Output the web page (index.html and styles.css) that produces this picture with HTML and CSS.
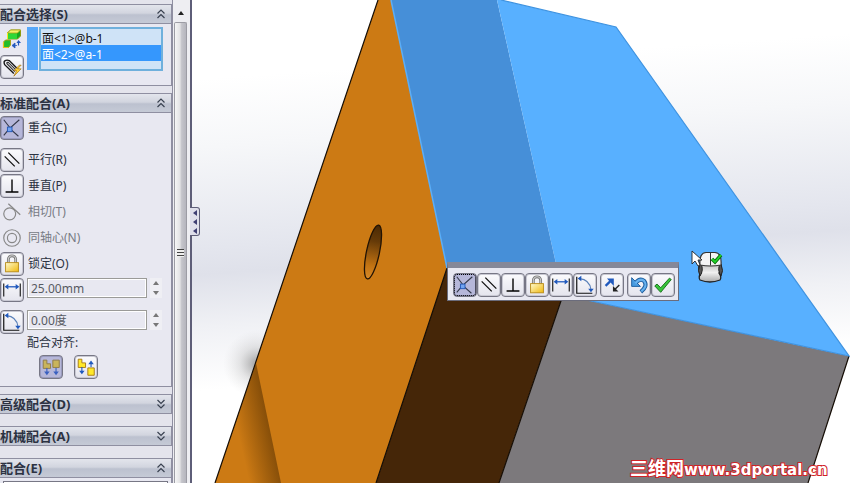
FILE: index.html
```html
<!DOCTYPE html>
<html lang="zh-CN">
<head>
<meta charset="utf-8">
<title>配合</title>
<link rel="stylesheet" href="styles.css">
</head>
<body>
<svg class="defs" aria-hidden="true">
  <defs>
    <linearGradient id="gold" x1="0" y1="0" x2="1" y2="1"><stop offset="0" stop-color="#fffbd0"/><stop offset="1" stop-color="#f0b80c"/></linearGradient>
    <symbol id="coincident" viewBox="0 0 24 24"><path d="M3 3l7 9L20 3M10 13l9 8M9 13l-6 7" fill="none" stroke="#333849" stroke-width="1.200"/><rect x="7" y="11" width="5" height="5" fill="#72a4f0" stroke="#2458b8"/></symbol>
    <symbol id="parallel" viewBox="0 0 24 24"><path d="M4 8l11 11M8 4l12 12" stroke="#111" stroke-width="1.400"/></symbol>
    <symbol id="perpendicular" viewBox="0 0 24 24"><path d="M5 18.500h14M12 5v13" stroke="#000" stroke-width="1.500"/></symbol>
    <symbol id="lock" viewBox="0 0 24 24"><path d="M8 12V7a4 4 0 0 1 8 0v5" fill="none" stroke="#777" stroke-width="3"/><path d="M8 12V7a4 4 0 0 1 8 0v5" fill="none" stroke="#ccc" stroke-width="1.200"/><rect x="5" y="10.500" width="14" height="10" fill="url(#gold)" stroke="#b88b18"/></symbol>
    <symbol id="distance" viewBox="0 0 24 24"><path d="M3 5v14M21 5v14" stroke="#111" stroke-width="1.200"/><path d="M6 8.500h12" stroke="#2059bd" stroke-width="1.400"/><path d="M4 8.500l4-3v6zM20 8.500l-4-3v6z" fill="#2059bd"/></symbol>
    <symbol id="angle" viewBox="0 0 24 24"><path d="M3 3v18H20" fill="none" stroke="#111" stroke-width="1.300"/><path d="M6 5q11 1 12.500 12" fill="none" stroke="#5a80b8" stroke-width="1.200"/><path d="M4 5l4-3v6zM18.500 20l-3-4h6z" fill="#2059bd"/></symbol>
    <symbol id="chevrons" viewBox="0 0 8 10"><path d="M.5 4.500L4 1l3.500 3.500M.5 9L4 5.500 7.500 9" fill="none" stroke="#394150" stroke-width="1.200"/></symbol>
  </defs>
</svg>

<aside class="panel">
  <section class="group">
    <h2 class="bar"><span>配合选择(S)</span><svg class="chev"><use href="#chevrons"/></svg></h2>
    <div class="body picks">
      <div class="pick-tools">
        <svg class="icon" viewBox="0 0 24 24" role="img" aria-label="实体">
          <path d="M7.500 6l3-3h10v6l-3 3h-10z" fill="#17a81f" stroke="#8f9a10"/><path d="M8 6h9v6H8z" fill="#2fd838"/><path d="M7.500 6l3-3h10l-3 3z" fill="#f4f36a" stroke="#a8a312" stroke-width=".8"/><path d="M7.500 6v6" stroke="#f5e925"/>
          <path d="M3.500 15l2-2h5v5l-2 2.500h-5z" fill="#22bd2a" stroke="#a5a012"/><path d="M3.500 15v5.500h5" fill="none" stroke="#e8c020" stroke-width="1.200"/>
          <path d="M14 18.500h3M12 18.500l3-2.500v5z" stroke="#2458bd" fill="#2458bd" stroke-width=".8"/><path d="M18.500 18.500v-3" stroke="#2458bd" stroke-width="1.200"/><path d="M16.500 16l2-3 2.500 3z" fill="#2458bd"/>
        </svg>
        <button class="tool" aria-label="多配合模式"><svg viewBox="0 0 24 24"><path d="M14 19L4 9.500Q2.500 6 4.500 5T9 5l10 10" fill="none" stroke="#171717" stroke-width="1.500"/><path d="M15 17L6.500 8.500Q6 6.500 8 7l9 9" fill="none" stroke="#333" stroke-width="1.300"/><path d="M20 10l-6 6h3l-3 6 8-8h-4l4-4z" fill="#ffd43a" stroke="#a56c08" stroke-width=".7"/></svg></button>
      </div>
      <div class="swatch"></div>
      <select class="entities" size="2" aria-label="要配合的实体"><option>面&lt;1&gt;@b-1</option><option selected>面&lt;2&gt;@a-1</option></select>
    </div>
  </section>

  <section class="group">
    <h2 class="bar"><span>标准配合(A)</span><svg class="chev"><use href="#chevrons"/></svg></h2>
    <div class="body mates">
      <div class="row spaced"><button class="tool on" id="m1"><svg><use href="#coincident"/></svg></button><label for="m1">重合(C)</label></div>
      <div class="row"><button class="tool" id="m2"><svg><use href="#parallel"/></svg></button><label for="m2">平行(R)</label></div>
      <div class="row"><button class="tool" id="m3"><svg><use href="#perpendicular"/></svg></button><label for="m3">垂直(P)</label></div>
      <div class="row off"><button class="tool" id="m4" disabled><svg viewBox="0 0 24 24"><circle cx="9.500" cy="14" r="6.500" fill="none" stroke="#888" stroke-width="1.300"/><path d="M8 3l13 12" stroke="#888" stroke-width="1.300"/></svg></button><label for="m4">相切(T)</label></div>
      <div class="row off"><button class="tool" id="m5" disabled><svg viewBox="0 0 24 24"><circle cx="12" cy="12" r="9" fill="none" stroke="#888" stroke-width="1.300"/><circle cx="12" cy="12" r="5" fill="none" stroke="#888" stroke-width="1.300"/></svg></button><label for="m5">同轴心(N)</label></div>
      <div class="row"><button class="tool" id="m6"><svg><use href="#lock"/></svg></button><label for="m6">锁定(O)</label></div>
      <div class="row value spaced"><button class="tool" aria-label="距离"><svg><use href="#distance"/></svg></button><input value="25.00mm" aria-label="距离值"><div class="spin"><button aria-label="增加"></button><button class="down" aria-label="减少"></button></div></div>
      <div class="row value"><button class="tool" aria-label="角度"><svg><use href="#angle"/></svg></button><input value="0.00度" aria-label="角度值"><div class="spin"><button aria-label="增加"></button><button class="down" aria-label="减少"></button></div></div>
      <p class="caption">配合对齐:</p>
      <div class="align">
        <button class="tool on" aria-label="同向对齐"><svg viewBox="0 0 24 24"><path d="M3.500 4.500h4v4h4v5h-8zM14 4.500h7v8h-7z" fill="#c9b45c" stroke="#8d7a44"/><path d="M7.500 13v5M17.500 13v5" stroke="#3a60c0" stroke-width="1.200"/><path d="M4.500 17h6l-3 4zM14.500 17h6l-3 4z" fill="#3a60c0"/></svg></button>
        <button class="tool" aria-label="反向对齐"><svg viewBox="0 0 24 24"><path d="M3.500 3.500h4v4h4v5h-8z" fill="#ffe92a" stroke="#a67912"/><path d="M14 13h7v8h-7z" fill="#ffe92a" stroke="#a67912"/><path d="M7.500 12v6M17.500 12V7" stroke="#2059bd" stroke-width="1.200"/><path d="M4.500 16h6l-3 4zM14.500 9h6l-3-4z" fill="#2059bd"/></svg></button>
      </div>
    </div>
  </section>

  <section class="group closed"><h2 class="bar"><span>高级配合(D)</span><svg class="chev flip"><use href="#chevrons"/></svg></h2></section>
  <section class="group closed"><h2 class="bar"><span>机械配合(A)</span><svg class="chev flip"><use href="#chevrons"/></svg></h2></section>
  <section class="group"><h2 class="bar"><span>配合(E)</span><svg class="chev"><use href="#chevrons"/></svg></h2><div class="body list"><div class="mate-list"></div></div></section>
</aside>

<div class="scroll"><button class="up" aria-label="向上滚动"></button><div class="thumb"><i></i></div></div>

<main class="view">
  <svg class="scene" viewBox="192 0 658 483" preserveAspectRatio="xMinYMin slice" role="img" aria-label="零件模型">
    <defs>
      <linearGradient id="hole" x1="0" y1="0" x2="0" y2="1"><stop offset="0" stop-color="#4a2905"/><stop offset=".3" stop-color="#653a08"/><stop offset=".75" stop-color="#c27312"/><stop offset="1" stop-color="#d88a28"/></linearGradient>
      <linearGradient id="shade" gradientUnits="userSpaceOnUse" x1="238" y1="432" x2="274" y2="424"><stop offset="0" stop-color="#6e3f05" stop-opacity="0"/><stop offset="1" stop-color="#6e3f05" stop-opacity=".85"/></linearGradient>
      <radialGradient id="cast" gradientUnits="userSpaceOnUse" cx="257" cy="364" r="34"><stop offset="0" stop-color="#555" stop-opacity=".55"/><stop offset=".5" stop-color="#888" stop-opacity=".2"/><stop offset="1" stop-color="#bbb" stop-opacity="0"/></radialGradient>
      <linearGradient id="body" x1="0" y1="0" x2="0" y2="1"><stop offset="0" stop-color="#bbb"/><stop offset=".5" stop-color="#f0f0f0"/><stop offset="1" stop-color="#aaa"/></linearGradient>
    </defs>
    <circle cx="257" cy="364" r="34" fill="url(#cast)"/>
    <path d="M378 0h13l56 268-71 215H215z" fill="#cc7a14"/>
    <path d="M256 363L281 483H215z" fill="url(#shade)"/>
    <path d="M447 268l116 27-64 188H376z" fill="#452608"/>
    <path d="M563 295l286 61-41 127H499z" fill="#7c797c"/>
    <path d="M391 0h106l66 295-116-27z" fill="#468fd8"/>
    <path d="M497 0h4l115 27 233 329-286-61z" fill="#58b0ff"/>
    <path d="M378 0L215 483M447 268l-71 215M563 295l-64 188M849 356l-41 127" fill="none" stroke="#150d05" stroke-width="1.200"/>
    <path d="M391 0l56 268" stroke="#5aaef8" stroke-width="1.500"/>
    <path d="M501 0l115 27 233 329-286-61" fill="none" stroke="#3f93e0" stroke-width="1.200"/>
    <ellipse cx="373" cy="252" rx="6.500" ry="27.500" transform="rotate(12 373 252)" fill="url(#hole)" stroke="#221304" stroke-width="1.300"/>
    <g>
      <path d="M700 263q-3 6 1 10-3 4-1 7 10 4 20 0 2-3-1-7 4-4 1-10z" fill="url(#body)" stroke="#222" stroke-width="1.300"/>
      <path d="M700 264q-3 7 0 12 4-6 1-12zM721 264q3 7 0 12-4-6-1-12z" fill="#555" stroke="#222"/>
      <path d="M700 265q-1-12 6-12.500h9q7 .5 6 12.500-10.500 2-21 0z" fill="#f4f4f4" stroke="#333" stroke-width="1.200"/><path d="M710.500 253v12.500" stroke="#333"/>
      <path d="M712 259l3 3 6-7" fill="none" stroke="#0a6e0a" stroke-width="3.500"/><path d="M712 259l3 3 6-7" fill="none" stroke="#22d52a" stroke-width="1.800"/>
      <path d="M692 251v13l3-3 3 5 2-1-2-5h4z" fill="#fff" stroke="#222" stroke-width=".9"/>
    </g>
    <text class="mark" x="630" y="475">三维网<tspan class="site">www.3dportal.cn</tspan></text>
  </svg>
  <button class="flyout" aria-label="收起面板"><i></i><i></i><i></i></button>
  <div class="toolbar" role="toolbar" aria-label="配合">
    <button class="tool on focus" aria-label="重合"><svg><use href="#coincident"/></svg></button>
    <button class="tool" aria-label="平行"><svg><use href="#parallel"/></svg></button>
    <button class="tool" aria-label="垂直"><svg><use href="#perpendicular"/></svg></button>
    <button class="tool" aria-label="锁定"><svg><use href="#lock"/></svg></button>
    <button class="tool" aria-label="距离"><svg><use href="#distance"/></svg></button>
    <button class="tool" aria-label="角度"><svg><use href="#angle"/></svg></button>
    <button class="tool apart" aria-label="反转对齐"><svg viewBox="0 0 24 24"><path d="M5 13l5-5" stroke="#2059bd" stroke-width="2.500"/><path d="M14 5v8L6.500 5z" fill="#2059bd"/><path d="M15 17l5-5" stroke="#222" stroke-width="1.500"/><path d="M13 13v6h6z" fill="#222"/></svg></button>
    <button class="tool apart" aria-label="撤消"><svg viewBox="0 0 24 24"><path d="M8 10q5-6 9.500-2.500Q22 13 14 19.500" fill="none" stroke="#195a9c" stroke-width="4.500"/><path d="M4 4v9.500h9.500z" fill="#4a9ce0" stroke="#195a9c"/><path d="M8 10q5-6 9.500-2.500Q22 13 14.500 19" fill="none" stroke="#67b2ef" stroke-width="2.500"/></svg></button>
    <button class="tool" aria-label="确定"><svg viewBox="0 0 24 24"><path d="M3 13l2.500-2 4 4L19 4.500l2 1.500L9.500 20z" fill="#38c53b" stroke="#116b15"/></svg></button>
  </div>
</main>
</body>
</html>
```

FILE: styles.css
```css
* { box-sizing: border-box; }
body {
  margin: 0;
  height: 100vh;
  display: flex;
  overflow: hidden;
  background: #e4e4ec;
  color: #2c3242;
  font: 12px/16px "Noto Sans", "Noto Sans CJK SC", sans-serif;
}
.defs { position: absolute; width: 0; height: 0; }
button { padding: 0; border: 0; background: none; font: inherit; }

.panel { flex: 0 0 172px; padding-top: 4px; overflow: hidden; }
.group { margin-bottom: 7px; border: 1px solid #8f8fa1; border-left: 0; background: #e8e8f1; }
.group.closed { margin-bottom: 12px; }
.bar {
  display: flex;
  align-items: center;
  justify-content: space-between;
  height: 18px;
  margin: 0;
  padding-right: 6px;
  background: linear-gradient(#e3e5ec, #d2d5df 45%, #bcc1cf 55%, #c5cad6);
  font-size: 13px;
  font-weight: 700;
  line-height: 18px;
}
.chev { width: 8px; height: 10px; }
.flip { transform: scaleY(-1); }
.body { border-top: 1px solid #8f8fa1; }

.tool {
  flex: none;
  width: 24px;
  height: 24px;
  border: 1px solid #777785;
  border-radius: 4px;
  background: linear-gradient(#fbfbfd, #e4e4ed);
  box-shadow: inset 0 0 0 1px #c9c9d3;
}
.tool svg { display: block; width: 22px; height: 22px; }
.tool.on { background: #b6b7d9; box-shadow: inset 0 0 0 1px #9a9bbd; }
.tool:disabled { border-color: transparent; background: none; box-shadow: none; }
.tool.focus { outline: 1px dotted #000; outline-offset: -2px; }

.picks { display: flex; align-items: flex-start; padding: 3px 8px 6px 0; }
.pick-tools { width: 27px; display: flex; flex-direction: column; gap: 4px; }
.icon { width: 24px; height: 24px; }
.swatch { width: 11px; height: 43px; margin-right: 1px; background: #58a8fa; }
.entities {
  flex: 1;
  min-width: 0;
  height: 44px;
  padding: 0;
  border: 2px solid #6fb0dc;
  border-radius: 0;
  outline: 0;
  background: #cfe3f7;
  color: #111;
  font: inherit;
  overflow: hidden;
}
.entities option { min-height: 16px; height: 16px; padding: 0 1px; line-height: 16px; }
.entities option:checked { background: linear-gradient(#3597fd, #3597fd); color: #fff; }

.mates { padding: 3px 0 7px; display: flex; flex-direction: column; gap: 2px; }
.row { display: flex; align-items: center; gap: 4px; height: 24px; }
.row.spaced { margin-bottom: 6px; }
.row.off { color: #777b84; }
.value { gap: 3px; align-items: flex-start; padding-right: 9px; }
.value input {
  flex: 1;
  min-width: 0;
  height: 20px;
  padding: 0 3px;
  border: 1px solid #9b9b98;
  box-shadow: inset 0 0 0 1px #fff;
  background: #e8e8f1;
  color: #585b63;
  font: inherit;
}
.spin { width: 12px; height: 20px; display: flex; flex-direction: column; justify-content: space-around; align-items: center; background: #efeff4; }
.spin button { border: 3px solid transparent; border-top: 0; border-bottom: 4px solid #777; }
.spin .down { transform: scaleY(-1); }
.caption { margin: 0 0 3px 27px; line-height: 14px; }
.align { display: flex; gap: 11px; padding-left: 39px; }
.list { padding: 3px; }
.mate-list { height: 80px; border: 1px solid #777785; background: #fff; }

.scroll {
  flex: 0 0 20px;
  display: flex;
  flex-direction: column;
  padding: 4px 3px 0 1px;
  border-left: 1px solid #8f8fa1;
  border-right: 2px solid #5e5e78;
  background: #eeeef2;
}
.up { height: 18px; display: grid; place-items: center; }
.up::after { content: ""; border: 3px solid transparent; border-top: 0; border-bottom: 4px solid #222; }
.thumb {
  flex: 1;
  display: grid;
  place-items: center;
  border: 1px solid #9c9ca4;
  border-bottom: 0;
  border-radius: 2px 2px 0 0;
  background: linear-gradient(90deg, #f6f6f6, #e3e3e5 45%, #c5c5cb 60%, #b5b5bd);
}
.thumb i { width: 7px; height: 8px; background: repeating-linear-gradient(#444 0 1px, #eee 1px 3px); }

.view {
  position: relative;
  flex: 1;
  min-width: 0;
  background: linear-gradient(176deg, #fff 15%, #f6f7f9 28%, #e4e6ee 47%, #dfe1ea 52%, #f0f1f5 62%, #fff 74%);
}
.scene { display: block; width: 100%; height: 100%; }
.mark {
  font: 700 18px "Noto Sans CJK SC", sans-serif;
  fill: #fff;
  stroke: #d02226;
  stroke-width: 2px;
  paint-order: stroke;
}
.site { font: 700 15px "DejaVu Sans", sans-serif; }
.flyout {
  position: absolute;
  left: -2px;
  top: 207px;
  width: 10px;
  height: 29px;
  display: flex;
  flex-direction: column;
  align-items: center;
  justify-content: space-around;
  border: 1px solid #5e5e78;
  border-left: 0;
  border-radius: 0 3px 3px 0;
  background: #dedeea;
}
.flyout i { border: 3px solid transparent; border-left: 0; border-right: 4px solid #3e3e72; }
.toolbar {
  position: absolute;
  left: 255px;
  top: 262px;
  display: flex;
  padding: 5px 3px 3px 5px;
  border: 1px solid #6b6c7c;
  border-top: 6px solid #858898;
  background: #e8e8f1;
}
.toolbar .apart { margin-left: 3px; }
```
